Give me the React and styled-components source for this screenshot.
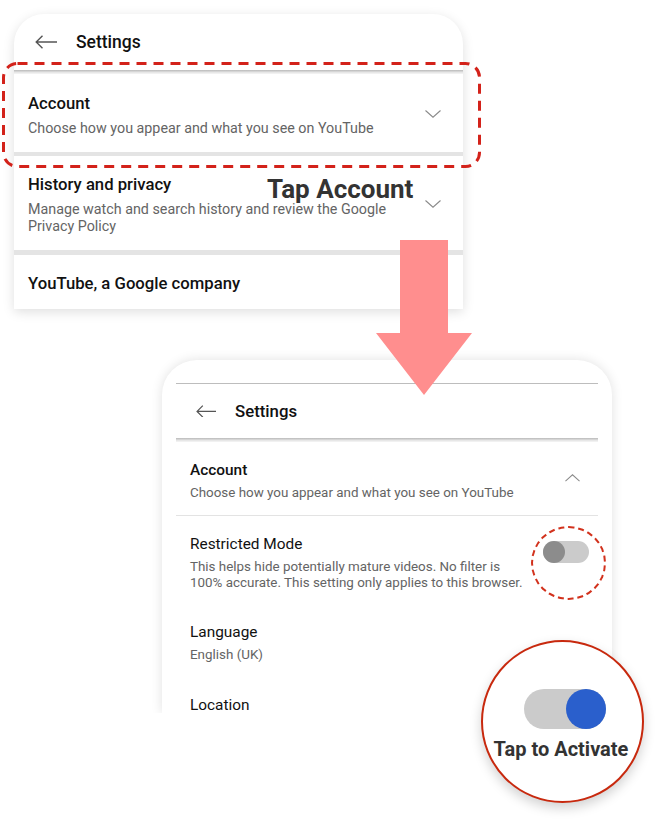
import React from "react";
import styled, { createGlobalStyle } from "styled-components";

const GlobalStyle = createGlobalStyle`
  html, body { margin: 0; padding: 0; background: #fff; }
  body { font-family: Roboto, "Noto Sans", "Liberation Sans", sans-serif; }
  * { box-sizing: border-box; }
`;

const Stage = styled.div`
  position: relative;
  width: 662px;
  height: 828px;
  overflow: hidden;
  padding-top: 14px;
  background: #fff;
`;

const TopCard = styled.section`
  margin-left: 14px;
  width: 449px;
  background: #fff;
  border-radius: 30px 30px 0 0;
  box-shadow: 0 3px 12px rgba(0, 0, 0, 0.13);
`;

const Header = styled.header`
  display: flex;
  align-items: center;
  gap: ${(p) => p.$gap}px;
  height: ${(p) => p.$h}px;
  padding-left: ${(p) => p.$pl}px;
  color: #111;
  font-size: ${(p) => p.$fs}px;
  font-weight: 500;
`;

const ShadowRule = styled.div`
  height: 4px;
  background: linear-gradient(#b9b9b9, #e6e6e6 60%, #f6f6f6);
`;

const ThickRule = styled.div`
  height: ${(p) => p.$h}px;
  background: #e4e4e4;
`;

const Row = styled.div`
  display: flex;
  align-items: flex-start;
  justify-content: space-between;
  padding: ${(p) => p.$pad};
`;

const RowText = styled.div`
  display: flex;
  flex-direction: column;
  gap: ${(p) => p.$gap}px;
  max-width: ${(p) => p.$max || 400}px;
`;

const Title = styled.div`
  font-size: ${(p) => p.$fs}px;
  line-height: 18px;
  font-weight: ${(p) => p.$w || 500};
  color: #111;
  white-space: nowrap;
`;

const Sub = styled.div`
  font-size: ${(p) => p.$fs}px;
  line-height: ${(p) => p.$lh}px;
  color: #646464;
`;

const ChevronBox = styled.div`
  display: flex;
  align-self: center;
  margin-top: ${(p) => p.$mt || 0}px;
  margin-right: ${(p) => p.$mr}px;
`;

const BottomClip = styled.div`
  margin-top: 31px;
  margin-left: 142px;
  width: 490px;
  padding: 20px 20px 0 20px;
  overflow: hidden;
`;

const BottomCard = styled.section`
  width: 450px;
  height: 353px;
  background: #fff;
  border-radius: 35px 35px 0 0;
  box-shadow: 0 0 12px rgba(0, 0, 0, 0.12);
  padding: 23px 14px 0 14px;
  overflow: hidden;
`;

const ThinRule = styled.div`
  height: 1px;
  background: ${(p) => p.$c};
`;

const Toggle = styled.div`
  position: relative;
  flex: none;
  width: ${(p) => p.$w}px;
  height: ${(p) => p.$h}px;
  border-radius: ${(p) => p.$h / 2}px;
  background: #cbcbcb;
`;

const Knob = styled.div`
  position: absolute;
  top: 0;
  ${(p) => (p.$on ? "right: 0;" : "left: 0;")}
  width: ${(p) => p.$d}px;
  height: ${(p) => p.$d}px;
  border-radius: 50%;
  background: ${(p) => p.$c};
`;

const ToggleSlot = styled.div`
  margin-right: 9px;
  margin-top: 6px;
`;

const DashRing = styled.div`
  position: absolute;
  left: 531px;
  top: 526px;
  width: 75px;
  height: 74px;
  border-radius: 50%;
  border: 2px dashed #d2311c;
`;

const Overlay = styled.svg`
  position: absolute;
  left: 0;
  top: 0;
  pointer-events: none;
`;

const Callout = styled.div`
  position: absolute;
  left: 267px;
  top: 174px;
  font-size: 26px;
  line-height: 30px;
  font-weight: 700;
  color: #333;
  white-space: nowrap;
`;

const Magnifier = styled.div`
  position: absolute;
  left: 481px;
  top: 640px;
  width: 163px;
  height: 163px;
  border-radius: 50%;
  background: #fff;
  border: 2px solid #c8290e;
  box-shadow: 0 5px 12px rgba(0, 0, 0, 0.18);
  display: flex;
  flex-direction: column;
  align-items: center;
  padding-top: 47px;
  gap: 8px;
`;

const MagToggle = styled.div`
  margin-left: 4px;
`;

const MagLabel = styled.div`
  margin-right: 3px;
  font-size: 20px;
  line-height: 24px;
  font-weight: 700;
  color: #333;
  white-space: nowrap;
`;

const BackArrow = ({ w }) => (
  <svg width={w} height={w * 0.64} viewBox="0 0 22 14" fill="none">
    <path d="M22 7H1.2M7.5 0.7L1.2 7l6.3 6.3" stroke="#555" strokeWidth="1.4" />
  </svg>
);

const Chevron = ({ up, w = 16 }) => (
  <svg width={w} height={w / 2} viewBox="0 0 16 8" fill="none">
    <path
      d={up ? "M0.5 7.5L8 0.8l7.5 6.7" : "M0.5 0.5L8 7.2l7.5-6.7"}
      stroke="#8a8a8a"
      strokeWidth="1.1"
    />
  </svg>
);

export default function App() {
  return (
    <>
      <GlobalStyle />
      <Stage>
        <TopCard>
          <Header $h={56} $pl={21} $gap={19} $fs={17.5}>
            <BackArrow w={22} />
            <span>Settings</span>
          </Header>
          <ShadowRule />
          <Row $pad="21px 0 15px 14px">
            <RowText $gap={6}>
              <Title $fs={16.7}>Account</Title>
              <Sub $fs={14.3} $lh={18}>Choose how you appear and what you see on YouTube</Sub>
            </RowText>
            <ChevronBox $mr={22} $mt={-4}>
              <Chevron />
            </ChevronBox>
          </Row>
          <ThickRule $h={4} />
          <Row $pad="20px 0 15px 14px">
            <RowText $gap={7} $max={372}>
              <Title $fs={16.7}>History and privacy</Title>
              <Sub $fs={14.3} $lh={17}>
                Manage watch and search history and review the Google Privacy Policy
              </Sub>
            </RowText>
            <ChevronBox $mr={22} $mt={-3}>
              <Chevron />
            </ChevronBox>
          </Row>
          <ThickRule $h={5} />
          <Row $pad="20px 14px 16px 14px">
            <Title $fs={16.7}>YouTube, a Google company</Title>
          </Row>
        </TopCard>

        <BottomClip>
          <BottomCard>
            <ThinRule $c="#bdbdbd" />
            <Header $h={54} $pl={20} $gap={19} $fs={16.8}>
              <BackArrow w={20} />
              <span>Settings</span>
            </Header>
            <ShadowRule />
            <Row $pad="19px 0 14px 14px">
              <RowText $gap={5}>
                <Title $fs={15.4}>Account</Title>
                <Sub $fs={13.4} $lh={17}>Choose how you appear and what you see on YouTube</Sub>
              </RowText>
              <ChevronBox $mr={18} $mt={-6}>
                <Chevron up w={15} />
              </ChevronBox>
            </Row>
            <ThinRule $c="#e3e3e3" />
            <Row $pad="19px 0 0 14px">
              <RowText $gap={6} $max={340}>
                <Title $fs={15.4} $w={400}>Restricted Mode</Title>
                <Sub $fs={13.4} $lh={16}>
                  This helps hide potentially mature videos. No filter is 100% accurate. This
                  setting only applies to this browser.
                </Sub>
              </RowText>
              <ToggleSlot>
                <Toggle $w={46} $h={22}>
                  <Knob $d={22} $c="#8c8c8c" />
                </Toggle>
              </ToggleSlot>
            </Row>
            <Row $pad="32px 0 0 14px">
              <RowText $gap={5}>
                <Title $fs={15.4} $w={400}>Language</Title>
                <Sub $fs={13.4} $lh={17}>English (UK)</Sub>
              </RowText>
            </Row>
            <Row $pad="33px 0 0 14px">
              <Title $fs={15.4} $w={400}>Location</Title>
            </Row>
          </BottomCard>
        </BottomClip>

        <Overlay width="662" height="828" viewBox="0 0 662 828">
          <rect
            x="3.5"
            y="63.5"
            width="476"
            height="103"
            rx="14"
            fill="none"
            stroke="#d3221a"
            strokeWidth="3"
            strokeDasharray="10 7"
          />
          <polygon
            points="400,240 448,240 448,333 472,333 424,395 376,333 400,333"
            fill="#ff8e8e"
          />
        </Overlay>

        <Callout>Tap Account</Callout>
        <DashRing />

        <Magnifier>
          <MagToggle>
            <Toggle $w={82} $h={40}>
              <Knob $on $d={40} $c="#2a5fcc" />
            </Toggle>
          </MagToggle>
          <MagLabel>Tap to Activate</MagLabel>
        </Magnifier>
      </Stage>
    </>
  );
}
